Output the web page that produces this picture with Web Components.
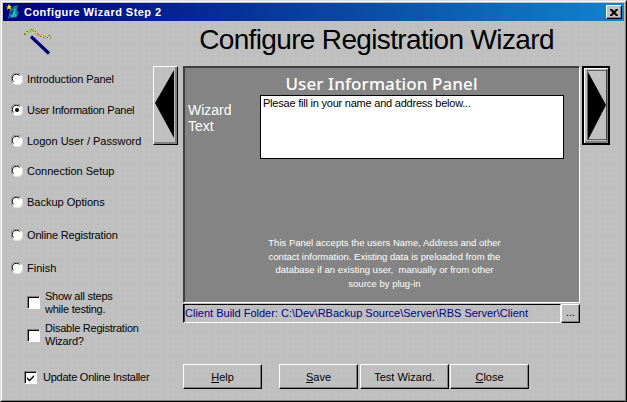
<!DOCTYPE html>
<html><head><meta charset="utf-8">
<style>
html,body{margin:0;padding:0;background:#c0c0c0}
body{font-family:"Liberation Sans",Arial,sans-serif;font-size:11px;color:#000}
</style></head>
<body>
<wiz-window>
  <wiz-titlebar slot="bar">Configure Wizard Step 2</wiz-titlebar>
  <wiz-side slot="side">
    <wiz-radio h="31" ls="-.1">Introduction Panel</wiz-radio>
    <wiz-radio h="31" ls="-.24" checked>User Information Panel</wiz-radio>
    <wiz-radio h="31">Logon User / Password</wiz-radio>
    <wiz-radio h="30">Connection Setup</wiz-radio>
    <wiz-radio h="32">Backup Options</wiz-radio>
    <wiz-radio h="34" ls="-.15">Online Registration</wiz-radio>
    <wiz-radio h="32">Finish</wiz-radio>
    <wiz-check h="37" inset="24" gap="5">Show all steps<br>while testing.</wiz-check>
    <wiz-check h="28" inset="24" gap="5">Disable Registration<br>Wizard?</wiz-check>
    <wiz-check h="24" top="16" inset="21" gap="6" checked>Update Online Installer</wiz-check>
  </wiz-side>
  <wiz-main slot="main">
    <wiz-heading>Configure Registration Wizard</wiz-heading>
    <wiz-stage>
      <wiz-arrow dir="left"></wiz-arrow>
      <wiz-panel heading="User Information Panel" label="Wizard Text" text="Plesae fill in your name and address below...">This Panel accepts the users Name, Address and other<br>contact information. Existing data is preloaded from the<br>database if an existing user,&nbsp; manually or from other<br>source by plug-in</wiz-panel>
      <wiz-arrow dir="right"></wiz-arrow>
    </wiz-stage>
    <wiz-folder>Client Build Folder: C:\Dev\RBackup Source\Server\RBS Server\Client</wiz-folder>
    <wiz-actions>
      <wiz-button w="79" key="H" rest="elp"></wiz-button>
      <wiz-button w="79" key="S" rest="ave" gap="17"></wiz-button>
      <wiz-button w="89" rest="Test Wizard." gap="2"></wiz-button>
      <wiz-button w="79" key="C" rest="lose" gap="1"></wiz-button>
    </wiz-actions>
  </wiz-main>
</wiz-window>
<script>
function def(name, html, setup){
  customElements.define(name, class extends HTMLElement{
    connectedCallback(){
      if(this.shadowRoot) return;
      const r=this.attachShadow({mode:'open'});
      r.innerHTML=typeof html==='function'?html(this):html;
      if(setup) setup(this,r);
    }
  });
}
const dots='background-color:#c0c0c0;background-image:radial-gradient(circle at 1px 1px,#bababa .6px,transparent .9px);background-size:6px 6px;';
def('wiz-window',`<style>
:host{display:block;width:627px;height:402px;box-sizing:border-box;${dots}
 border-style:solid;border-width:1px;border-color:#dfdfdf #000 #000 #dfdfdf;position:relative}
.in{box-sizing:border-box;height:100%;border:1px solid;border-color:#fff #808080 #808080 #fff;padding:1px;display:flex;flex-direction:column}
.c{display:flex;flex:1;min-height:0}
</style><div class="in"><slot name="bar"></slot><div class="c"><slot name="side"></slot><slot name="main"></slot></div></div>`);
def('wiz-titlebar',`<style>
:host{display:flex;align-items:center;height:18px;flex:none;background:linear-gradient(90deg,#000080 0%,#0a4ea8 60%,#1084d0 100%);color:#fff;font:bold 11px "Liberation Sans",Arial,sans-serif;letter-spacing:.46px;padding:0 2px;width:617px;box-sizing:content-box}
svg{flex:none;margin-right:3px}
.t{flex:1;white-space:nowrap}
.x{width:16px;height:14px;box-sizing:border-box;background:#c0c0c0;border:1px solid;border-color:#fff #000 #000 #fff;box-shadow:inset -1px -1px 0 #808080;display:flex;align-items:center;justify-content:center}
</style>
<svg width="16" height="16" viewBox="0 0 16 16"><path d="M3 15L5 6 9 2 13 1 12 6 14 9 11 14 7 12Z" fill="#0b7f8c"/><path d="M6 14L7 7 11 4 10 9 12 12Z" fill="#2bb5c9"/><path d="M5 9L9 5 7 11Z" fill="#06345e"/><path d="M4 0L5 2 7 2 5.500 3.500 6 6 4 4.500 2 6 2.500 3.500 1 2 3 2Z" fill="#ffe800"/><rect x="2" y="2" width="1" height="1" fill="#e01010"/></svg>
<span class="t"><slot></slot></span>
<span class="x"><svg style="margin:0" width="8" height="7" viewBox="0 0 8 7"><path d="M0 0h2l2 2 2-2h2v1L5.500 3.500 8 6v1H6L4 5 2 7H0V6l2.500-2.500L0 1Z" fill="#000"/></svg></span>`);
def('wiz-side',`<style>
:host{display:block;width:150px;flex:none;box-sizing:border-box}
.w{display:block;margin-left:20px;height:42px;box-sizing:border-box}
.list{display:flex;flex-direction:column;margin-top:0}
</style>
<svg class="w" width="30" height="42" viewBox="0 0 30 42">
<path d="M8 15.500L26 32.500" stroke="#000070" stroke-width="3.200" fill="none"/>
<g id="s"></g></svg>
<div class="list"><slot></slot></div>`,(h,r)=>{
 const c=['#e02020','#30d030','#f0e020'];
 const pts=[[1,12],[1,13],[2,11],[2,13],[3,10],[3,12],[4,10],[5,11],[5,9],[6,9],[7,10],[7,8],[8,8],[9,9],[9,11],[10,8],[10,10],[11,9],[12,10],[12,12],[13,10],[14,12],[14,14],[15,12],[15,13],[16,14],[17,12],[17,15],[18,13],[19,15],[20,16],[20,14],[21,13],[22,15],[22,17],[23,14],[24,16],[25,14],[26,16],[26,14],[27,15],[28,14],[27,17],[28,16]];
 r.getElementById('s').innerHTML=pts.map((p,i)=>`<rect x="${p[0]}" y="${p[1]}" width="1" height="1" fill="${c[i%3]}"/>`).join('');
});
def('wiz-radio',h=>`<style>
:host{display:flex;align-items:center;height:${h.getAttribute('h')}px;padding-left:8px;box-sizing:border-box;white-space:nowrap;font-size:11px;letter-spacing:${h.getAttribute('ls')||0}px}
svg{flex:none;margin-right:4px}
</style>
<svg width="12" height="12" viewBox="0 0 12 12"><circle cx="6" cy="6" r="5.500" fill="#fff"/><path d="M1.500 9.500A5.500 5.500 0 0 1 9.500 1.500" fill="none" stroke="#808080"/><path d="M2.500 8.500A4 4 0 0 1 8.500 2.500" fill="none" stroke="#000"/><path d="M10.500 2.500A5.500 5.500 0 0 1 2.500 10.500" fill="none" stroke="#e8e8e8"/>${h.hasAttribute('checked')?'<circle cx="6" cy="6" r="2" fill="#000"/>':''}</svg><slot></slot>`);
def('wiz-check',h=>`<style>
:host{display:flex;align-items:center;height:${h.getAttribute('h')}px;margin-top:${h.getAttribute('top')||0}px;padding-left:${h.getAttribute('inset')}px;box-sizing:border-box;white-space:nowrap;font-size:11px;line-height:13px;letter-spacing:-.24px}
.b{flex:none;width:13px;height:13px;box-sizing:border-box;background:#fff;border:1px solid;border-color:#808080 #fff #fff #808080;box-shadow:inset 1px 1px 0 #000;margin-right:${h.getAttribute('gap')}px;display:flex}
svg{display:block}
</style><span class="b">${h.hasAttribute('checked')?'<svg width="11" height="11" viewBox="0 0 11 11"><path d="M2 5L4.500 7.500 9 3v2L4.500 9.500 2 7Z" fill="#000"/></svg>':''}</span><span><slot></slot></span>`);
def('wiz-main',`<style>:host{display:flex;flex-direction:column;flex:1;min-width:0}</style><slot></slot>`);
def('wiz-heading',`<style>
:host{display:flex;align-items:center;justify-content:center;height:36px;padding-top:2px;box-sizing:border-box;width:447px;font:28px "Liberation Sans",Arial,sans-serif;letter-spacing:-.65px;color:#000;white-space:nowrap;margin-bottom:9px}
</style><slot></slot>`);
def('wiz-stage',`<style>:host{display:flex;align-items:flex-start;height:237px;flex:none}</style><slot></slot>`);
def('wiz-arrow',h=>h.getAttribute('dir')==='left'?`<style>
:host{display:block;flex:none;width:25px;height:79px;box-sizing:border-box;border:1px solid;border-color:#fff #000 #000 #fff;box-shadow:inset -2px -2px 0 #808080;margin-right:5px}
svg{display:block}
</style><svg width="23" height="77" viewBox="0 0 23 77"><path d="M20 3V71L1 36Z" fill="#000"/></svg>`:`<style>
:host{display:block;flex:none;width:28px;height:79px;box-sizing:border-box;border:1px solid #000;margin-left:2px;background:#c0c0c0;box-shadow:inset 1px 1px 0 #000,inset -1px -1px 0 #000,inset 2px 2px 0 #fff,inset -3px -3px 0 #808080}
svg{display:block}
</style><svg width="26" height="77" viewBox="0 0 26 77"><rect x="4.500" y="3.500" width="19" height="69" fill="none" stroke="#000" stroke-dasharray="1 1"/><path d="M5 5V73L23 38Z" fill="#000"/></svg>`);
def('wiz-panel',h=>`<style>
:host{display:block;width:397px;height:237px;flex:none;box-sizing:border-box;border:1px solid;border-color:#404040 #fff #fff #404040;
 background-color:#848484;background-image:conic-gradient(#808080 25%,#888888 0 50%,#808080 0 75%,#888888 0);background-size:2px 2px;color:#fff;box-shadow:inset 1px 1px 0 #404040}
.g{display:grid;grid-template-columns:76px 304px 15px;grid-template-rows:28px 64px auto;height:100%}
h2{grid-column:1/4;margin:0;font:500 17px "Noto Sans","Open Sans",sans-serif;letter-spacing:.1px;text-align:center;line-height:34px;white-space:nowrap;height:28px}
.l{font-size:14px;line-height:16px;padding:7px 0 0 4px;width:50px}
.t{box-sizing:border-box;height:64px;border:1px solid #000;background:#fff;color:#000;font-size:11px;line-height:13px;padding:1px 2px;letter-spacing:-.22px}
.d{grid-column:1/4;text-align:center;font-size:9.500px;line-height:13.500px;padding:77px 0 0 6px;display:flex;justify-content:center;align-items:flex-start}
</style><div class="g"><h2>${h.getAttribute('heading')}</h2><div class="l">${h.getAttribute('label')}</div><div class="t">${h.getAttribute('text')}</div><div></div><div class="d"><div><slot></slot></div></div></div>`);
def('wiz-folder',`<style>
:host{display:flex;width:397px;height:19px;margin:1px 0 0 30px;box-sizing:border-box;flex:none}
.f{flex:1;box-sizing:border-box;border:1px solid;border-color:#000 #fff #fff #000;color:#000080;font-size:11px;line-height:15px;padding:1px 0 0 1px;white-space:nowrap;overflow:hidden;box-shadow:inset 1px 0 0 #404040}
.b{width:19px;flex:none;box-sizing:border-box;border:1px solid;border-color:#fff #000 #000 #fff;box-shadow:inset -1px -1px 0 #808080;text-align:center;font-size:11px;line-height:14px}
</style><div class="f"><slot></slot></div><div class="b">...</div>`);
def('wiz-actions',`<style>:host{display:flex;margin:41px 0 0 30px;flex:none}</style><slot></slot>`);
def('wiz-button',h=>{const k=h.getAttribute('key');return `<style>
:host{display:flex;align-items:center;justify-content:center;width:${h.getAttribute('w')}px;height:25px;box-sizing:border-box;margin-left:${h.getAttribute('gap')||0}px;border:1px solid;border-color:#fff #000 #000 #fff;box-shadow:inset -1px -1px 0 #808080;font-size:11px;white-space:nowrap;flex:none}
</style><span>${k?`<u>${k}</u>`:''}${h.getAttribute('rest')}</span>`});
</script>
</body></html>
